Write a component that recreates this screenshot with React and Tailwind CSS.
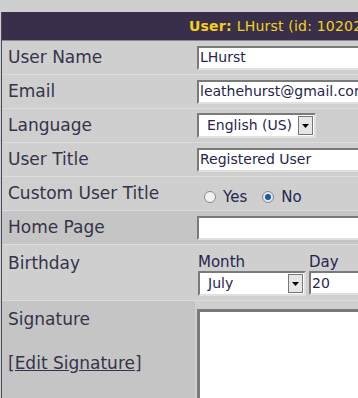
import React from 'react';

const font = { fontFamily: '"DejaVu Sans", Verdana, sans-serif' };

const Row = ({ label, dark, children }) => (
    <div className={`flex h-[34px] border-b border-[#dcdcdc] ${dark ? 'bg-[#c5c5c5]' : ''}`}>
        <div className="w-[193px] shrink-0 pl-[6px] flex items-center text-[17px] text-[#34344a]">{label}</div>
        <div className="flex-1 flex items-center pl-[2px]">{children}</div>
    </div>
);

const TextBox = ({ value, className = '' }) => (
    <div className={`h-[24px] w-[300px] bg-white border-2 border-t-[#7a7a7a] border-l-[#7a7a7a] border-r-[#e0e0e0] border-b-[#e0e0e0] pl-[1px] flex items-center text-[14px] text-[#26264e] ${className}`}>
        {value}
    </div>
);

const Select = ({ value, width }) => (
    <div className={`h-[25px] ${width} bg-white border-2 border-t-[#7a7a7a] border-l-[#7a7a7a] border-r-[#e0e0e0] border-b-[#e0e0e0] flex items-center justify-between text-[14px] text-[#26264e]`}>
        <span className="pl-[8px]">{value}</span>
        <span className="w-[15px] h-[19px] mr-[1px] bg-[#e6e6e6] border border-[#777] flex items-center justify-center">
            <svg width="7" height="4" viewBox="0 0 7 4"><path d="M0 0h7L3.5 4z" fill="#000" /></svg>
        </span>
    </div>
);

const Radio = ({ checked, label, className = '' }) => (
    <label className={`flex items-center gap-[7px] ${className}`}>
        <span className={`w-[12px] h-[12px] rounded-full border border-[#8a8a8a] flex items-center justify-center ${checked ? 'bg-[#dfe8ee]' : 'bg-[#f2f2f2]'}`}>
            {checked && <span className="w-[6px] h-[6px] rounded-full bg-[#1a5a9a]" />}
        </span>
        <span className="text-[15px] text-[#26264e]">{label}</span>
    </label>
);

export default function App() {
    return (
        <div style={font} className="w-[358px] h-[398px] overflow-hidden bg-[#cfcfcf] pt-[12px]">
            <div className="w-[520px] ml-[1px] border-l border-[#4a4a5a] h-full">
                <div className="h-[29px] bg-[#3a2f4b] flex items-center pl-[187px] text-[14px] tracking-[0.2px] text-[#f2d21a] border-b border-[#8a8a8a]">
                    <span className="font-bold mr-[5px]">User:</span>
                    <span>LHurst (id: 10202)</span>
                </div>
                <Row label="User Name"><TextBox value="LHurst" /></Row>
                <Row label="Email"><TextBox value="leathehurst@gmail.com" /></Row>
                <Row label="Language"><Select value="English (US)" width="w-[119px]" /></Row>
                <Row label="User Title"><TextBox value="Registered User" /></Row>
                <Row label="Custom User Title">
                    <div className="flex items-center pl-[7px] pt-[7px]">
                        <Radio label="Yes" className="mr-[15px]" />
                        <Radio checked label="No" />
                    </div>
                </Row>
                <Row label="Home Page" dark><TextBox value="" /></Row>
                <div className="flex h-[56px] border-b border-[#dcdcdc]">
                    <div className="w-[193px] shrink-0 pl-[6px] pt-[6px] text-[17px] text-[#34344a]">Birthday</div>
                    <div className="flex-1 pl-[3px] pt-[9px] flex gap-[3px]">
                        <div className="flex flex-col">
                            <span className="text-[15px] text-[#26264e] leading-[17px]">Month</span>
                            <Select value="July" width="w-[108px]" />
                        </div>
                        <div className="flex flex-col">
                            <span className="text-[15px] text-[#26264e] leading-[17px]">Day</span>
                            <TextBox value="20" className="w-[80px]" />
                        </div>
                    </div>
                </div>
                <div className="flex h-[120px]">
                    <div className="w-[193px] shrink-0 bg-[#c5c5c5] pl-[6px] pt-[6px] text-[17px] text-[#34344a]">
                        <div>Signature</div>
                        <a className="block mt-[18px] underline">[Edit Signature]</a>
                    </div>
                    <div className="flex-1 pl-[2px] pt-[8px]">
                        <div className="w-[300px] h-[120px] bg-white border-[3px] border-[#7a7a7a]" />
                    </div>
                </div>
            </div>
        </div>
    );
}
